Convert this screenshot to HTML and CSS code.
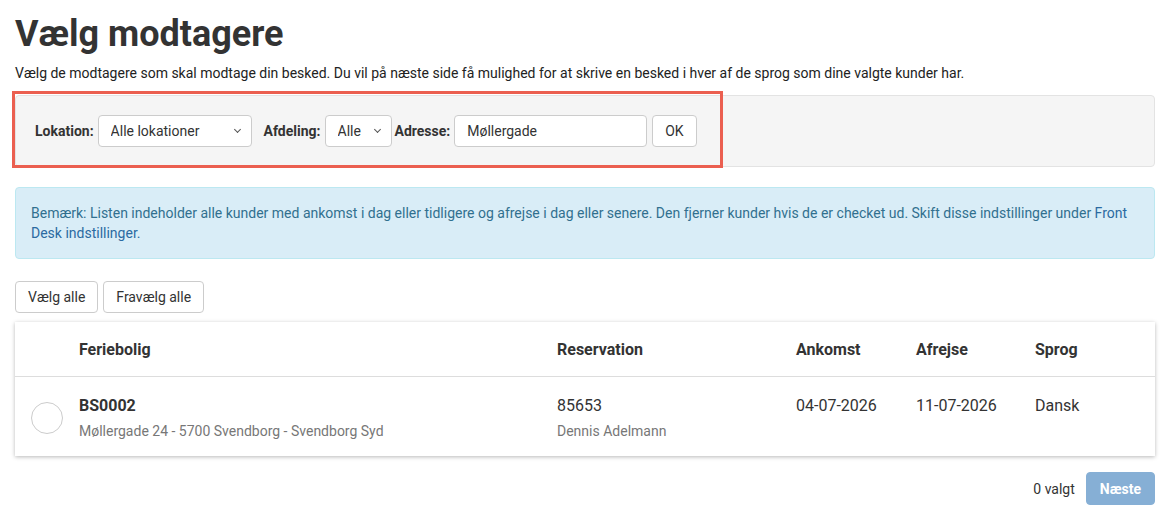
FILE: index.html
```html
<!DOCTYPE html>
<html lang="da">
<head>
  <meta charset="UTF-8">
  <title>Vælg modtagere</title>
  <link rel="stylesheet" href="styles.css">
</head>
<body>
<div class="page">
  <h1>Vælg modtagere</h1>
  <p class="lead">Vælg de modtagere som skal modtage din besked. Du vil på næste side få mulighed for at skrive en besked i hver af de sprog som dine valgte kunder har.</p>

  <!-- Filters -->
  <div class="filter-wrap">
    <form class="filter-well">
      <label for="lokation">Lokation:</label>
      <div class="select-box select-lokation">
        <select id="lokation"><option>Alle lokationer</option></select>
      </div>
      <label for="afdeling" class="gap-left">Afdeling:</label>
      <div class="select-box select-afdeling">
        <select id="afdeling"><option>Alle</option></select>
      </div>
      <label for="adresse" class="gap-small">Adresse:</label>
      <input type="text" id="adresse" class="text-input" value="Møllergade">
      <button type="button" class="btn">OK</button>
    </form>
    <div class="highlight"></div>
  </div>

  <div class="alert-info">
    Bemærk: Listen indeholder alle kunder med ankomst i dag eller tidligere og afrejse i dag eller senere. Den fjerner kunder hvis de er checket ud. Skift disse indstillinger under <a href="#">Front Desk indstillinger.</a>
  </div>

  <div class="toolbar">
    <button type="button" class="btn">Vælg alle</button>
    <button type="button" class="btn">Fravælg alle</button>
  </div>

  <!-- Recipients -->
  <div class="card">
    <div class="row head">
      <div></div>
      <div>Feriebolig</div>
      <div>Reservation</div>
      <div>Ankomst</div>
      <div>Afrejse</div>
      <div>Sprog</div>
    </div>
    <div class="row body">
      <div class="pick"><span class="radio"></span></div>
      <div>
        <div class="main strong">BS0002</div>
        <div class="sub">Møllergade 24 - 5700 Svendborg - Svendborg Syd</div>
      </div>
      <div>
        <div class="main">85653</div>
        <div class="sub">Dennis Adelmann</div>
      </div>
      <div><div class="main">04-07-2026</div></div>
      <div><div class="main">11-07-2026</div></div>
      <div><div class="main">Dansk</div></div>
    </div>
  </div>

  <div class="footer">
    <span class="count">0 valgt</span>
    <button type="button" class="btn btn-primary" disabled>Næste</button>
  </div>
</div>
</body>
</html>
```

FILE: styles.css
```css
body {
  margin: 0;
  font-family: Roboto, "Liberation Sans", Arial, sans-serif;
  font-size: 14px;
  color: #333;
  background: #fff;
}
.page {
  padding: 14px 12px 0 15px;
}
h1 {
  margin: 0;
  font-size: 36px;
  line-height: 40px;
  font-weight: 700;
  color: #333;
}
.lead {
  margin: 9px 0 12px;
  line-height: 20px;
  color: #222;
}

/* filter box */
.filter-wrap {
  position: relative;
}
.filter-well {
  display: flex;
  align-items: center;
  height: 32px;
  padding: 19px 19px 19px;
  background: #f5f5f5;
  border: 1px solid #e3e3e3;
  border-radius: 4px;
  margin: 0;
}
.filter-well label {
  font-weight: 700;
  margin-right: 4px;
}
.filter-well .gap-left {
  margin-left: 12px;
}
.filter-well .gap-small {
  margin-left: 3px;
}
.highlight {
  position: absolute;
  left: -3px;
  top: -4px;
  width: 705px;
  height: 71px;
  border: 3px solid #eb5f50;
  pointer-events: none;
}
.select-box {
  position: relative;
  height: 32px;
}
.select-box::after {
  content: "";
  position: absolute;
  right: 12px;
  top: 12px;
  width: 4px;
  height: 4px;
  border-right: 1px solid #555;
  border-bottom: 1px solid #555;
  transform: rotate(45deg);
  pointer-events: none;
}
.select-box select {
  appearance: none;
  -webkit-appearance: none;
  width: 100%;
  height: 32px;
  padding: 0 24px 0 12px;
  font: inherit;
  color: #333;
  background: #fff;
  border: 1px solid #ccc;
  border-radius: 4px;
}
.select-lokation {
  width: 154px;
}
.select-afdeling {
  width: 67px;
}
.text-input {
  width: 193px;
  height: 32px;
  box-sizing: border-box;
  padding: 0 12px;
  font: inherit;
  color: #333;
  border: 1px solid #ccc;
  border-radius: 4px;
  margin-right: 5px;
}

/* buttons */
.btn {
  height: 32px;
  padding: 0 12px;
  font: inherit;
  color: #333;
  background: #fff;
  border: 1px solid #ccc;
  border-radius: 4px;
}
.btn-primary {
  height: 33px;
  color: #fff;
  font-weight: 700;
  background: #86afd5;
  border-color: #86afd5;
  padding: 0 13px;
}

/* info */
.alert-info {
  margin-top: 20px;
  padding: 15px;
  line-height: 20px;
  color: #31708f;
  background: #d9edf7;
  border: 1px solid #bce8f1;
  border-radius: 4px;
}
.alert-info a {
  color: #2b6aa1;
  text-decoration: none;
}

.toolbar {
  display: flex;
  gap: 5px;
  margin-top: 22px;
}

/* table card */
.card {
  margin-top: 9px;
  background: #fff;
  box-shadow: 0 1px 4px rgba(0, 0, 0, 0.28);
}
.row {
  display: grid;
  grid-template-columns: 64px 478px 239px 120px 119px 1fr;
}
.row.head {
  height: 54px;
  align-items: center;
  font-size: 16px;
  font-weight: 700;
  border-bottom: 1px solid #ddd;
}
.row.body {
  padding: 18px 0 15px;
  font-size: 16px;
}
.pick {
  display: flex;
  align-items: center;
  padding-left: 16px;
}
.radio {
  width: 30px;
  height: 30px;
  border: 1px solid #ccc;
  border-radius: 50%;
}
.main {
  line-height: 22px;
}
.strong {
  font-weight: 700;
}
.sub {
  margin-top: 4px;
  font-size: 14px;
  line-height: 20px;
  color: #777;
}

.footer {
  display: flex;
  justify-content: flex-end;
  align-items: center;
  gap: 11px;
  margin-top: 16px;
}
```
